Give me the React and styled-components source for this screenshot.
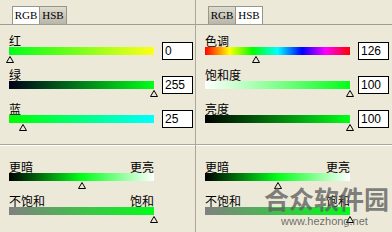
import React from 'react';
import styled, { createGlobalStyle } from 'styled-components';

const GlobalStyle = createGlobalStyle`
	html, body {
		margin: 0;
		padding: 0;
		background: #ece9d8;
	}
`;

const Window = styled.div`
	position: relative;
	width: 392px;
	height: 232px;
	display: flex;
	background: #ece9d8;
	overflow: hidden;
	font-family: 'Noto Sans CJK SC', 'Liberation Sans', sans-serif;
	color: #000;
`;

const Panel = styled.div`
	width: ${(p) => p.$width}px;
	display: flex;
	flex-direction: column;
	border-right: ${(p) => (p.$divider ? '1px solid #aca899' : 'none')};
`;

const TabStrip = styled.div`
	height: 24px;
	display: flex;
	align-items: flex-end;
	padding-left: 12px;
	border-bottom: 1px solid #a09d92;
`;

const Tab = styled.div`
	width: 28px;
	height: 18px;
	box-sizing: border-box;
	border: 1px solid #98958a;
	border-bottom: none;
	font-family: 'Liberation Serif', serif;
	font-size: 11px;
	line-height: 17px;
	text-align: center;
	background: ${(p) =>
		p.$active ? '#ffffff' : 'linear-gradient(to bottom, #dedbcf, #b8b5a9)'};
	margin-right: -1px;
`;

const Section = styled.div`
	padding: ${(p) => p.$top}px 0 0 9px;
	display: flex;
	flex-direction: column;
`;

const Block = styled.div`
	height: 34px;
	display: flex;
	gap: 8px;
`;

const Left = styled.div`
	width: 145px;
	display: flex;
	flex-direction: column;
`;

const Label = styled.div`
	height: 13px;
	font-size: 12px;
	line-height: 13px;
	white-space: nowrap;
`;

const LabelRow = styled(Label)`
	display: flex;
	justify-content: space-between;
`;

const Track = styled.div`
	position: relative;
	height: 17px;
`;

const Bar = styled.div`
	height: 8px;
	background: ${(p) => p.$grad};
`;

const ThumbWrap = styled.div`
	position: absolute;
	top: 9px;
	width: 8px;
	height: 7px;
	margin-left: -4px;
	line-height: 0;
`;

const ValueBox = styled.div`
	margin-top: 8px;
	width: 31px;
	height: 18px;
	box-sizing: border-box;
	border: 1px solid #000;
	background: #fff;
	font-family: 'Liberation Sans', sans-serif;
	font-size: 12px;
	line-height: 16px;
	padding-left: 2px;
`;

const Separator = styled.div`
	margin-top: 8px;
	height: 0;
	border-top: 1px solid #aca899;
	border-bottom: 1px solid #ffffff;
`;

const Watermark = styled.div`
	position: absolute;
	left: 264px;
	top: 183px;
	font-family: 'Noto Sans CJK SC', sans-serif;
	font-weight: 700;
	font-size: 25px;
	line-height: 30px;
	letter-spacing: 0px;
	color: rgba(95, 95, 95, 0.78);
	white-space: nowrap;
`;

const WatermarkUrl = styled.div`
	position: absolute;
	left: 281px;
	top: 215px;
	font-family: 'Liberation Sans', sans-serif;
	font-size: 11px;
	line-height: 13px;
	color: rgba(85, 85, 85, 0.85);
	white-space: nowrap;
`;

const Thumb = ({ pct }) => (
	<ThumbWrap style={{ left: `${Math.max(pct, 1)}%` }}>
		<svg width="8" height="7" viewBox="0 0 8 7">
			<polygon points="4,0.5 7.5,6.5 0.5,6.5" fill="none" stroke="#000" strokeWidth="1" />
		</svg>
	</ThumbWrap>
);

const Slider = ({ grad, pct }) => (
	<Track>
		<Bar $grad={grad} />
		<Thumb pct={pct} />
	</Track>
);

const Channel = ({ label, value, max, grad }) => (
	<Block>
		<Left>
			<Label>{label}</Label>
			<Slider grad={grad} pct={(value / max) * 100} />
		</Left>
		<ValueBox>{value}</ValueBox>
	</Block>
);

const Adjust = ({ from, to, grad, pct }) => (
	<Block>
		<Left>
			<LabelRow>
				<span>{from}</span>
				<span>{to}</span>
			</LabelRow>
			<Slider grad={grad} pct={pct} />
		</Left>
	</Block>
);

const green = 'rgb(0,255,25)';

const rgbChannels = [
	{ label: '红', value: 0, max: 255, grad: `linear-gradient(to right, ${green}, rgb(255,255,25))` },
	{ label: '绿', value: 255, max: 255, grad: 'linear-gradient(to right, rgb(0,0,25), rgb(0,255,25))' },
	{ label: '蓝', value: 25, max: 255, grad: 'linear-gradient(to right, rgb(0,255,0), rgb(0,255,255))' },
];

const hsbChannels = [
	{
		label: '色调',
		value: 126,
		max: 360,
		grad: 'linear-gradient(to right, #f00, #ff0 17%, #0f0 33%, #0ff 50%, #00f 67%, #f0f 83%, #f00)',
	},
	{ label: '饱和度', value: 100, max: 100, grad: `linear-gradient(to right, #fff, ${green})` },
	{ label: '亮度', value: 100, max: 100, grad: `linear-gradient(to right, #000, ${green})` },
];

const adjustments = [
	{ from: '更暗', to: '更亮', pct: 50, grad: `linear-gradient(to right, #000, ${green} 50%, #fff)` },
	{ from: '不饱和', to: '饱和', pct: 100, grad: `linear-gradient(to right, #808080, ${green})` },
];

const ColorPanel = ({ width, divider, active, channels }) => (
	<Panel $width={width} $divider={divider}>
		<TabStrip>
			<Tab $active={active === 'RGB'}>RGB</Tab>
			<Tab $active={active === 'HSB'}>HSB</Tab>
		</TabStrip>
		<Section $top={9}>
			{channels.map((c) => (
				<Channel key={c.label} {...c} />
			))}
		</Section>
		<Separator />
		<Section $top={14}>
			{adjustments.map((a) => (
				<Adjust key={a.from} {...a} />
			))}
		</Section>
	</Panel>
);

const App = () => {
	return (
		<>
			<GlobalStyle />
			<Window>
				<ColorPanel width={195} divider active="RGB" channels={rgbChannels} />
				<ColorPanel width={196} active="HSB" channels={hsbChannels} />
				<Watermark>合众软件园</Watermark>
				<WatermarkUrl>www.hezhong.net</WatermarkUrl>
			</Window>
		</>
	);
};

export default App;
